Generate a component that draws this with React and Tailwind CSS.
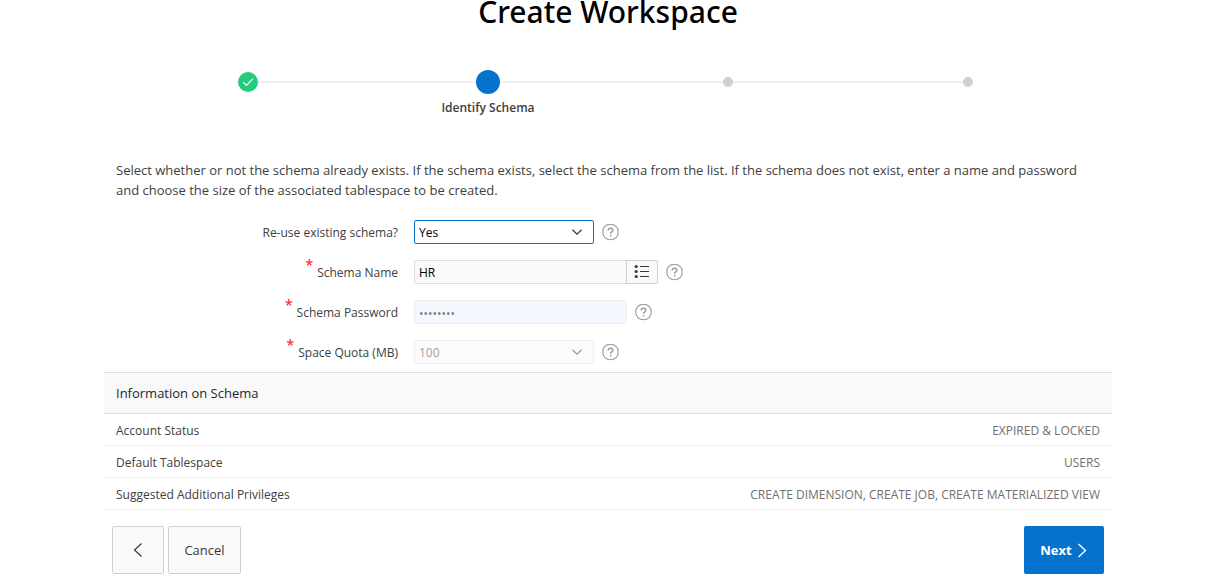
import { useState } from "react";

const steps = [
  { name: "Start", state: "done" },
  { name: "Identify Schema", state: "current" },
  { name: "Identify Administrator", state: "todo" },
  { name: "Confirm", state: "todo" },
];

const schemaInfo = [
  ["Account Status", "EXPIRED & LOCKED"],
  ["Default Tablespace", "USERS"],
  ["Suggested Additional Privileges", "CREATE DIMENSION, CREATE JOB, CREATE MATERIALIZED VIEW"],
];

function StepMarker({ state }) {
  if (state === "done") {
    return (
      <span className="z-10 flex size-5 items-center justify-center rounded-full bg-[#23cb7d]">
        <svg viewBox="0 0 20 20" className="size-5" fill="none" stroke="#fff" strokeWidth="1.2" aria-hidden="true">
          <path d="M5.3 10.2 8.4 13.3 14.9 6.6" />
        </svg>
      </span>
    );
  }
  if (state === "current") {
    return <span className="z-10 size-6 rounded-full bg-[#0572ce]" />;
  }
  return <span className="z-10 size-2.5 rounded-full bg-[#d0d0d0]" />;
}

function Progress() {
  return (
    <ol className="grid grid-cols-4 px-6">
      {steps.map((step, i) => (
        <li key={step.name} aria-label={step.name} className="flex flex-col items-center gap-1">
          <div className="flex h-6 w-full items-center">
            <span className={i === 0 ? "h-0.5 flex-1" : "h-0.5 flex-1 bg-[#efefef]"} />
            <StepMarker state={step.state} />
            <span className={i === steps.length - 1 ? "h-0.5 flex-1" : "h-0.5 flex-1 bg-[#efefef]"} />
          </div>
          {step.state === "current" && (
            <span className="text-[12px] leading-5 font-semibold text-[#404040]">{step.name}</span>
          )}
        </li>
      ))}
    </ol>
  );
}

function HelpButton({ label }) {
  return (
    <button type="button" aria-label={`Help: ${label}`} className="ml-2 text-[#999]">
      <svg viewBox="0 0 17 17" className="size-[17px]" fill="none" stroke="currentColor" aria-hidden="true">
        <circle cx="8.5" cy="8" r="7.8" strokeWidth="1.1" />
        <path d="M6.2 6.4C6.2 5 7.2 4.3 8.5 4.3s2.3.7 2.3 2c0 1.5-2.3 1.6-2.3 3.4" strokeWidth="1.4" />
        <circle cx="8.5" cy="11.6" r="0.9" fill="currentColor" stroke="none" />
      </svg>
    </button>
  );
}

function Field({ id, label, required, children }) {
  return (
    <div className="flex h-10 items-center">
      <div className="flex w-[310px] shrink-0 justify-end gap-1 pt-0.5 pr-4">
        {required && (
          <span aria-hidden="true" className="text-[14px] leading-2 font-semibold text-[#ff3040]">
            *
          </span>
        )}
        <label htmlFor={id} className="text-[12px] leading-6 text-[#404040]">
          {label}
        </label>
      </div>
      {children}
      <HelpButton label={label} />
    </div>
  );
}

function Select({ id, value, onChange, options, disabled }) {
  return (
    <div className="relative w-[180px]">
      <select
        id={id}
        value={value}
        onChange={onChange}
        disabled={disabled}
        className="block h-6 w-full appearance-none rounded-xs border border-[#0572ce] bg-white px-1 pt-0.5 text-[12px] leading-5 text-black outline-none disabled:border-[#efefef] disabled:bg-[#fcfcfc] disabled:text-[#a0a0a0] disabled:opacity-100"
      >
        {options.map((o) => (
          <option key={o}>{o}</option>
        ))}
      </select>
      <svg
        viewBox="0 0 12 12"
        className={
          disabled
            ? "pointer-events-none absolute top-1.5 right-[11px] size-3 text-[#999]"
            : "pointer-events-none absolute top-1.5 right-[11px] size-3 text-[#333]"
        }
        fill="none"
        stroke="currentColor"
        strokeWidth="1.2"
        aria-hidden="true"
      >
        <path d="M1.5 3.8 6 8.2 10.5 3.8" />
      </svg>
    </div>
  );
}

export default function App() {
  const [reuse, setReuse] = useState("Yes");
  const [schema, setSchema] = useState("HR");

  return (
    <main className="bg-white pr-[9px] pb-3 font-['Open_Sans','Noto_Sans',sans-serif]">
      <div className="mx-auto max-w-[1008px]">
        <h1 className="text-center font-['Noto_Sans','Open_Sans',sans-serif] text-[30px] leading-[24px] font-medium text-black">
          Create Workspace
        </h1>

        <div className="pt-[46px]">
          <Progress />
        </div>

        <form onSubmit={(e) => e.preventDefault()}>
          <p className="px-3 pt-[42px] pb-3 text-[13px] leading-5 text-[#404040]">
            Select whether or not the schema already exists. If the schema exists, select the schema from the list. If
            the schema does not exist, enter a name and password and choose the size of the associated tablespace to be
            created.
          </p>

          <Field id="reuse" label="Re-use existing schema?">
            <Select id="reuse" value={reuse} onChange={(e) => setReuse(e.target.value)} options={["Yes", "No"]} />
          </Field>
          <Field id="schema" label="Schema Name" required>
            <div className="flex">
              <input
                id="schema"
                type="text"
                value={schema}
                onChange={(e) => setSchema(e.target.value)}
                className="h-6 w-[212px] rounded-l-xs border border-r-0 border-[#dfdfdf] bg-[#f9f9f9] px-1 text-[12px] text-black outline-none"
              />
              <button
                type="button"
                aria-label="Choose schema"
                className="flex h-6 w-8 items-center justify-center rounded-r-xs border border-[#cfcfcf] bg-[#f9f9f9] text-[#383838]"
              >
                <svg viewBox="0 0 16 16" className="size-4" aria-hidden="true">
                  <g fill="currentColor">
                    <circle cx="2.2" cy="2.5" r="1.6" />
                    <circle cx="2.2" cy="7.5" r="1.6" />
                    <circle cx="2.2" cy="12.5" r="1.6" />
                    <path d="M6 2h9v1H6zM6 7h9v1H6zM6 12h9v1H6z" />
                  </g>
                </svg>
              </button>
            </div>
          </Field>
          <Field id="password" label="Schema Password" required>
            <input
              id="password"
              type="password"
              defaultValue="password"
              disabled
              className="h-6 w-[213px] rounded-xs border border-[#efefef] bg-[#f3f8fe] px-1 pt-0.5 text-[12px] text-[#808080]"
            />
          </Field>
          <Field id="quota" label="Space Quota (MB)" required>
            <Select id="quota" value="100" options={["100"]} disabled />
          </Field>

          <section aria-labelledby="info-title">
            <h2
              id="info-title"
              className="border-y border-[#dfdfdf] bg-[#f9f9f9] px-3 text-[13px] leading-10 text-[#262626]"
            >
              Information on Schema
            </h2>
            <table className="w-full border-collapse text-[12px] leading-[29px]">
              <tbody>
                {schemaInfo.map(([name, value]) => (
                  <tr key={name} className="border-b border-[#efefef]">
                    <th scope="row" className="pt-0.5 pb-0 pl-3 text-left font-normal text-[#404040]">
                      {name}
                    </th>
                    <td className="pt-0.5 pr-3 pb-0 text-right text-[#707070]">{value}</td>
                  </tr>
                ))}
              </tbody>
            </table>
          </section>

          <div className="flex gap-1 px-2 pt-4">
            <button
              type="button"
              aria-label="Previous"
              className="flex h-12 w-[52px] items-center justify-center rounded-xs border border-[#cfcfcf] bg-[#f9f9f9] text-[#383838]"
            >
              <svg viewBox="0 0 16 16" className="size-4" fill="none" stroke="currentColor" strokeWidth="1.2" aria-hidden="true">
                <path d="M11.5 1.5 4.5 8l7 6.5" />
              </svg>
            </button>
            <button
              type="button"
              className="h-12 w-[73px] rounded-xs border border-[#cfcfcf] bg-[#f9f9f9] pt-0.5 text-[13px] text-[#383838]"
            >
              Cancel
            </button>
            <button
              type="submit"
              className="ml-auto flex h-12 w-20 items-center justify-center gap-1 rounded-xs bg-[#0572ce] pt-0.5 text-[13px] font-bold text-white"
            >
              Next
              <svg viewBox="0 0 12 16" className="h-4 w-3" fill="none" stroke="currentColor" strokeWidth="1.4" aria-hidden="true">
                <path d="M2.5 1 9.5 7.5 2.5 14" />
              </svg>
            </button>
          </div>
        </form>
      </div>
    </main>
  );
}
